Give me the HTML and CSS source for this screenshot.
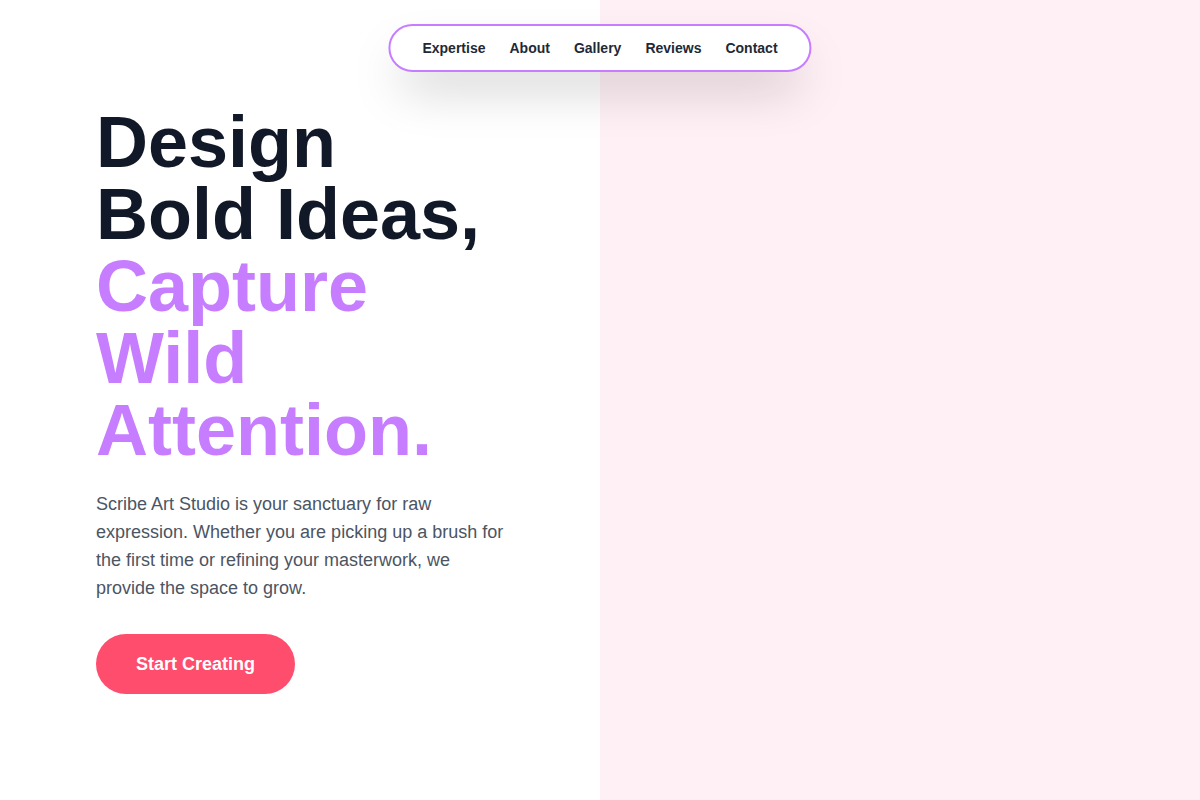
FILE: index.html
```html
<!DOCTYPE html>
<html lang="en">
<head>
<meta charset="utf-8">
<title>Scribe Art Studio</title>
<link rel="stylesheet" href="styles.css">
</head>
<body>
<div class="page">
  <nav class="nav">
    <a href="#">Expertise</a>
    <a href="#">About</a>
    <a href="#">Gallery</a>
    <a href="#">Reviews</a>
    <a href="#">Contact</a>
  </nav>
  <section class="left">
    <h1 class="title">Design<br>Bold Ideas,<br><span class="accent">Capture<br>Wild<br>Attention.</span></h1>
    <p class="lead">Scribe Art Studio is your sanctuary for raw expression. Whether you are picking up a brush for the first time or refining your masterwork, we provide the space to grow.</p>
    <a class="cta" href="#">Start Creating</a>
  </section>
  <section class="right"></section>
</div>
</body>
</html>
```

FILE: styles.css
```css
* { box-sizing: border-box; }
html, body { margin: 0; padding: 0; }
body {
  font-family: "Liberation Sans", Arial, sans-serif;
  background: #ffffff;
}
.page {
  display: grid;
  grid-template-columns: 600px 600px;
  height: 800px;
  position: relative;
  overflow: hidden;
}
.nav {
  position: absolute;
  top: 24px;
  left: 50%;
  transform: translateX(-50%);
  display: flex;
  gap: 24px;
  padding: 12px 32px;
  height: 48px;
  align-items: center;
  background: #ffffff;
  border: 2px solid #c77dff;
  border-radius: 9999px;
  box-shadow: 0 25px 50px -12px rgba(0, 0, 0, 0.25);
  z-index: 2;
}
.nav a {
  font-size: 14px;
  font-weight: 700;
  color: #1f2937;
  text-decoration: none;
  line-height: 20px;
}
.left {
  padding: 106px 96px 0 96px;
  display: flex;
  flex-direction: column;
  align-items: flex-start;
}
.right {
  background: #fff0f5;
}
.title {
  margin: 0;
  font-size: 72px;
  line-height: 72px;
  font-weight: 700;
  color: #111827;
}
.accent { color: #c77dff; }
.lead {
  margin: 24px 0 0 0;
  font-size: 18px;
  line-height: 28px;
  color: #4b5563;
}
.cta {
  margin-top: 32px;
  display: inline-block;
  padding: 16px 40px;
  font-size: 18px;
  line-height: 28px;
  font-weight: 700;
  color: #ffffff;
  background: #ff4d6d;
  border-radius: 9999px;
  text-decoration: none;
}
```
